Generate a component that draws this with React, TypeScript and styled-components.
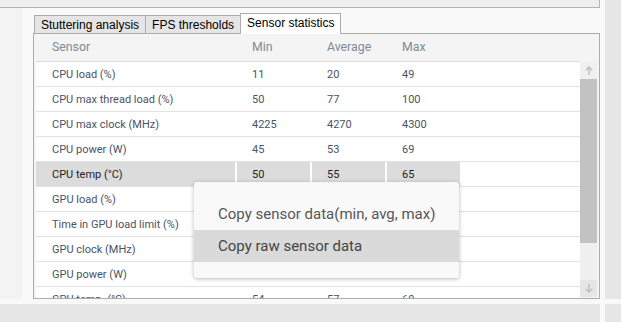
import styled, { createGlobalStyle } from "styled-components";

type SensorRow = {
  name: string;
  min: string;
  avg: string;
  max: string;
  selected?: boolean;
};

const rows: SensorRow[] = [
  { name: "CPU load (%)", min: "11", avg: "20", max: "49" },
  { name: "CPU max thread load (%)", min: "50", avg: "77", max: "100" },
  { name: "CPU max clock (MHz)", min: "4225", avg: "4270", max: "4300" },
  { name: "CPU power (W)", min: "45", avg: "53", max: "69" },
  { name: "CPU temp (°C)", min: "50", avg: "55", max: "65", selected: true },
  { name: "GPU load (%)", min: "97", avg: "99", max: "100" },
  { name: "Time in GPU load limit (%)", min: "0", avg: "0", max: "0" },
  { name: "GPU clock (MHz)", min: "2505", avg: "2550", max: "2580" },
  { name: "GPU power (W)", min: "180", avg: "196", max: "210" },
  { name: "GPU temp. (°C)", min: "54", avg: "57", max: "60" },
];

const tabs = ["Stuttering analysis", "FPS thresholds", "Sensor statistics"];

// Sensor statistics tab of the capture analysis view, with the
// right-click menu open over the selected row.
export default function App() {
  return (
    <>
      <GlobalStyle />
      <Page>
        <TopBar />
        <SideRail $row="1 / 3" />
        <Main>
          <LeftRail />
          <TabArea>
            <TabStrip>
              {tabs.map((t, i) => (
                <Tab key={t} $active={i === 2}>
                  {t}
                </Tab>
              ))}
            </TabStrip>
            <Panel>
              <TableColumn>
                <HeaderRow>
                  <HeaderCell $first>Sensor</HeaderCell>
                  <HeaderCell>Min</HeaderCell>
                  <HeaderCell>Average</HeaderCell>
                  <HeaderCell>Max</HeaderCell>
                </HeaderRow>
                {rows.map((r) => (
                  <Row key={r.name}>
                    <Cell $first $selected={r.selected}>
                      {r.name}
                    </Cell>
                    <Cell $selected={r.selected}>{r.min}</Cell>
                    <Cell $selected={r.selected}>{r.avg}</Cell>
                    <Cell $selected={r.selected}>{r.max}</Cell>
                  </Row>
                ))}
              </TableColumn>
              <ScrollColumn>
                <ScrollTrack>
                  <ScrollButton>
                    <svg width="8" height="9" viewBox="0 0 8 9">
                      <path d="M4 1 V9 M0.8 4.2 L4 1 L7.2 4.2" stroke="#bdbdbd" strokeWidth="1.4" fill="none" />
                    </svg>
                  </ScrollButton>
                  <ScrollThumb />
                  <ScrollButton $pressed>
                    <svg width="8" height="9" viewBox="0 0 8 9">
                      <path d="M4 0 V8 M0.8 4.8 L4 8 L7.2 4.8" stroke="#bdbdbd" strokeWidth="1.4" fill="none" />
                    </svg>
                  </ScrollButton>
                </ScrollTrack>
              </ScrollColumn>
            </Panel>
          </TabArea>
        </Main>
        <BottomBar />
        <SideRail $row="4" />

        <ContextMenu>
          <MenuItem>Copy sensor data(min, avg, max)</MenuItem>
          <MenuItem $hover>Copy raw sensor data</MenuItem>
        </ContextMenu>
      </Page>
    </>
  );
}

const GlobalStyle = createGlobalStyle`
  html, body {
    margin: 0;
    padding: 0;
    background: #f9f9f9;
  }
  * {
    box-sizing: border-box;
  }
`;

const Page = styled.div`
  position: relative;
  width: 621px;
  height: 322px;
  overflow: hidden;
  display: grid;
  grid-template-columns: 600px 5px 16px;
  grid-template-rows: 8px 291px 5px 18px;
  background: #f9f9f9;
`;

const TopBar = styled.div`
  grid-column: 1;
  grid-row: 1;
  background: #efefef;
  border-right: 1px solid #b4b4b4;
  border-bottom: 1px solid #b4b4b4;
`;

const SideRail = styled.div<{ $row: string }>`
  grid-column: 3;
  grid-row: ${(p) => p.$row};
  background: #e6e6e6;
`;

const BottomBar = styled.div`
  grid-column: 1;
  grid-row: 4;
  background: #e6e6e6;
`;

const Main = styled.div`
  grid-column: 1;
  grid-row: 2;
  display: flex;
`;

const LeftRail = styled.div`
  width: 22px;
  background: #f3f3f3;
`;

const TabArea = styled.div`
  flex: 1;
  margin-left: 11px;
  padding-top: 5px;
  display: flex;
  flex-direction: column;
`;

const TabStrip = styled.div`
  display: flex;
  align-items: flex-end;
  height: 20px;
  padding-left: 1px;
`;

const Tab = styled.div<{ $active?: boolean }>`
  position: relative;
  z-index: ${(p) => (p.$active ? 1 : 0)};
  height: ${(p) => (p.$active ? "21px" : "18px")};
  margin-bottom: ${(p) => (p.$active ? "-1px" : "0")};
  margin-left: -1px;
  &:first-child {
    margin-left: 0;
  }
  padding: 0 6px;
  display: flex;
  align-items: center;
  padding-bottom: ${(p) => (p.$active ? "2px" : "0")};
  background: ${(p) => (p.$active ? "#ffffff" : "#e5e5e5")};
  border: 1px solid #acacac;
  border-bottom: none;
  font-family: "Liberation Sans", Arial, sans-serif;
  font-size: 12px;
  color: #000;
  white-space: nowrap;
`;

const Panel = styled.div`
  flex: 1;
  display: flex;
  border: 1px solid #acacac;
  background: #f4f4f4;
  padding: 0 2px 0 2px;
  overflow: hidden;
`;

const TableColumn = styled.div`
  flex: 1;
  overflow: hidden;
  font-family: Roboto, "Noto Sans", sans-serif;
  font-size: 11px;
`;

const HeaderRow = styled.div`
  display: grid;
  grid-template-columns: 199px 73px 73px 73px;
  column-gap: 2px;
  height: 28px;
  border-bottom: 1px solid #dcdcdc;
  font-size: 12.3px;
`;

const HeaderCell = styled.div<{ $first?: boolean }>`
  display: flex;
  align-items: center;
  padding-left: ${(p) => (p.$first ? "16px" : "15px")};
  padding-bottom: 1px;
  color: #7e8a98;
`;

const Row = styled.div`
  display: grid;
  grid-template-columns: 199px 73px 73px 73px;
  column-gap: 2px;
  height: 25px;
  background: #ffffff;
  border-bottom: 1px solid #e2e2e2;
`;

const Cell = styled.div<{ $first?: boolean; $selected?: boolean }>`
  display: flex;
  align-items: center;
  padding-left: ${(p) => (p.$first ? "16px" : "15px")};
  background: ${(p) => (p.$selected ? "#dcdcdc" : "transparent")};
  color: ${(p) => (p.$selected ? "#1b1f27" : "#4a5363")};
  white-space: nowrap;
`;

const ScrollColumn = styled.div`
  width: 17px;
  padding-top: 28px;
  padding-bottom: 1px;
  display: flex;
`;

const ScrollTrack = styled.div`
  flex: 1;
  display: flex;
  flex-direction: column;
  background: #f0f0f0;
`;

const ScrollButton = styled.div<{ $pressed?: boolean }>`
  height: 17px;
  display: flex;
  align-items: center;
  justify-content: center;
  background: ${(p) => (p.$pressed ? "#e6e6e6" : "#f0f0f0")};
  margin-top: ${(p) => (p.$pressed ? "auto" : "0")};
`;

const ScrollThumb = styled.div`
  height: 164px;
  background: #c2c2c2;
`;

const ContextMenu = styled.div`
  position: absolute;
  left: 194px;
  top: 182px;
  width: 265px;
  padding: 16px 0;
  background: #f9f9f9;
  border-radius: 3px;
  box-shadow: 0 1px 4px rgba(0, 0, 0, 0.28);
  font-family: Roboto, "Noto Sans", sans-serif;
  font-size: 15px;
`;

const MenuItem = styled.div<{ $hover?: boolean }>`
  height: 32px;
  display: flex;
  align-items: center;
  padding-left: 24px;
  background: ${(p) => (p.$hover ? "#dadada" : "transparent")};
  color: ${(p) => (p.$hover ? "#454545" : "#575757")};
  white-space: nowrap;
`;
